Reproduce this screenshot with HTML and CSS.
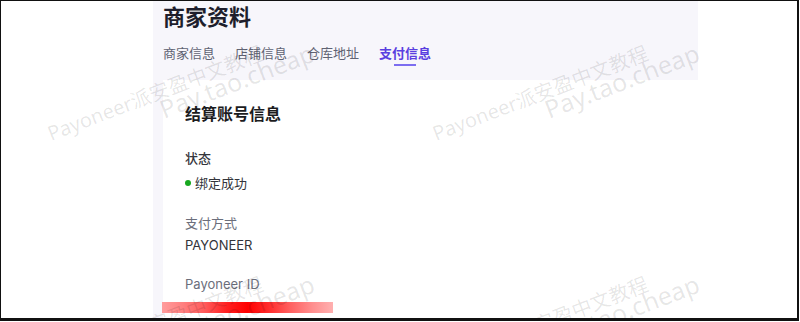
FILE: index.html
```html
<!DOCTYPE html>
<html>
<head>
  <meta charset="utf-8">
  <meta name="viewport" content="width=device-width, initial-scale=1">
  <link rel="stylesheet" href="styles.css">
</head>
<body>
<div class=frame>
<div class=panel>
  <div class=head>
    <h1 class=title>商家资料</h1>
    <div class=tabs>
      <span class=tab>商家信息</span>
      <span class=tab>店铺信息</span>
      <span class=tab>仓库地址</span>
      <span class="tab active">支付信息</span>
    </div>
  </div>
  <div class=body>
    <div class=card>
      <h2 class=card_title>结算账号信息</h2>
      <div class="label dark">状态</div>
      <div class="value first"><i class=dot></i>绑定成功</div>
      <div class="label group">支付方式</div>
      <div class="value latin">PAYONEER</div>
      <div class="label group id">Payoneer ID</div>
      <div class=redact></div>
    </div>
  </div>
</div>
<svg class=watermark width="797" height="317" xmlns="http://www.w3.org/2000/svg">
  <defs>
    <g id=wm>
      <text x="50" y="140" font-size="20" transform="rotate(-21 50 140)">Payoneer派安盈中文教程</text>
      <text x="163" y="118" font-size="25" transform="rotate(-21 163 118)">Pay.tao.cheap</text>
    </g>
  </defs>
  <use href="#wm"/>
  <use href="#wm" transform="translate(385 0)"/>
  <use href="#wm" transform="translate(0 231)"/>
  <use href="#wm" transform="translate(385 231)"/>
</svg>
</div>
</body>
</html>
```

FILE: styles.css
```css
html, body {
  margin: 0;
  background: white;
  font-family: Inter, "Noto Sans CJK SC", sans-serif;
}
.frame {
  position: relative;
  box-sizing: border-box;
  width: 799px;
  height: 321px;
  border: 1px solid #111;
  border-right-width: 2px;
  border-bottom-width: 3px;
  overflow: hidden;
  display: flex;
}
.panel {
  margin-left: 152px;
  width: 545px;
  background: #f7f6fb;
  display: flex;
  flex-direction: column;
}
.head {
  padding: 1px 0 14px 10px;
}
.title {
  margin: 0;
  font-size: 22px;
  line-height: 30px;
  font-weight: 700;
  color: #1e1e2c;
}
.tabs {
  margin-top: 11px;
  display: flex;
  gap: 20px;
}
.tab {
  font-size: 13px;
  line-height: 20px;
  color: #606373;
}
.tab::after {
  content: "";
  display: block;
  width: 22px;
  height: 2px;
  margin: 1px auto 0;
}
.tab.active {
  color: #5a3fe0;
  font-weight: 600;
}
.tab.active::after {
  background: #7c6df0;
}
.body {
  flex: 1;
  padding-left: 10px;
  display: flex;
}
.card {
  flex: 1;
  background: white;
  padding: 22px 0 0 22px;
}
.card_title {
  margin: 0;
  font-size: 16px;
  line-height: 24px;
  font-weight: 700;
  color: #1c1c1e;
}
.label {
  font-size: 13px;
  line-height: 20px;
  color: #6b6e7b;
}
.label.dark {
  margin-top: 22px;
  color: #35363c;
  font-weight: 500;
}
.label.group {
  margin-top: 20px;
}
.label.id {
  margin-top: 19px;
}
.value {
  font-size: 13px;
  line-height: 20px;
  color: #33343a;
  margin-top: 2px;
}
.value.first {
  margin-top: 5px;
}
.dot {
  display: inline-block;
  width: 6px;
  height: 6px;
  border-radius: 50%;
  background: #17a81f;
  margin-right: 4px;
  vertical-align: middle;
  position: relative;
  top: -1px;
}
.redact {
  margin: 8px 0 0 -23px;
  width: 171px;
  height: 11px;
  background: linear-gradient(90deg, #ff9c9c 0, #ff8080 12%, #ff5a5a 25%, #ff2020 38%, #ff0000 50%, #ff2a2a 62%, #ff6060 75%, #ff8e8e 88%, #ffb0b0 100%);
}
.watermark {
  position: absolute;
  top: 0;
  left: 0;
  pointer-events: none;
  font-family: "Noto Sans", "Noto Sans CJK SC", sans-serif;
  fill: #000;
  fill-opacity: 0.1;
}
```
